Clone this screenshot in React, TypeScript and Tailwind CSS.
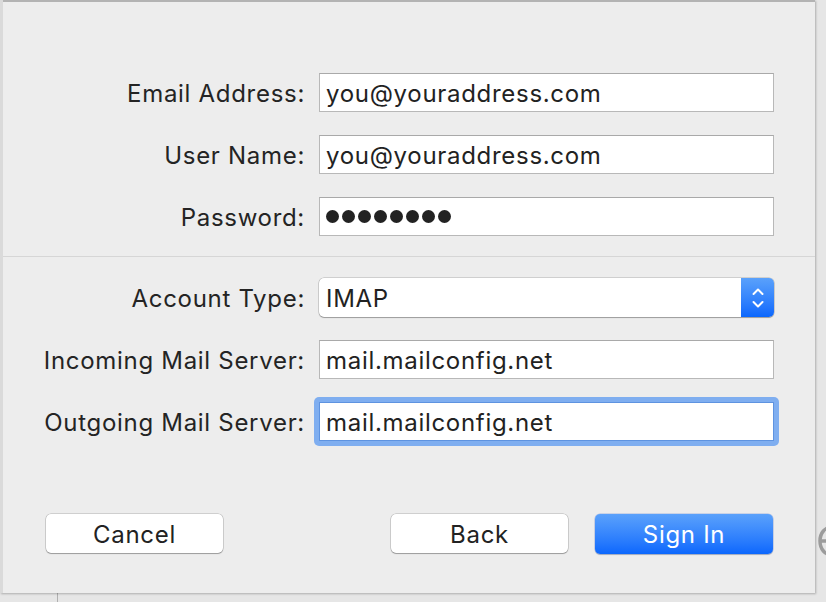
import React from "react";

const font = { fontFamily: "Inter, 'Liberation Sans', sans-serif" };

const txt = "text-[24px] tracking-[0.7px] leading-none";

function Field({ label, value, focused }: { label: string; value: React.ReactNode; focused?: boolean }) {
  return (
    <div className="flex items-center h-[39px]">
      <div className={"w-[305px] text-right text-[#242424] pr-[1px] pt-[3px] " + txt}>{label}</div>
      <div className="ml-[13px] w-[455px] h-[39px] relative">
        {focused && (
          <div className="absolute -inset-[5px] rounded-[5px] bg-[#7faef0]" />
        )}
        <div
          className={
            "relative h-full bg-white border flex items-center pl-[6px] pt-[3px] text-[#222] " + txt + " " +
            (focused ? "border-[#5e93e0]" : "border-[#b8b8b8] border-t-[#a9a9a9]")
          }
        >
          {value}
        </div>
      </div>
    </div>
  );
}

function Dots() {
  return (
    <div className="flex gap-[3px] -mt-[3px]">
      {Array.from({ length: 8 }).map((_, i) => (
        <div key={i} className="w-[13px] h-[13px] rounded-full bg-[#222]" />
      ))}
    </div>
  );
}

const whiteBtn =
  "h-[39px] rounded-[5px] bg-white shadow-[0_0_0_0.5px_rgba(0,0,0,0.25),0_1px_1px_rgba(0,0,0,0.25)] text-[#222] pt-[3px] " + txt;

export default function App() {
  return (
    <div className="w-[826px] h-[602px] bg-[#e6e6e6] relative overflow-hidden" style={font}>
      <div className="absolute left-[57px] top-[590px] w-[1px] h-[12px] bg-[#b0b0b0]" />
      <svg className="absolute left-[817px] top-[524px]" width="30" height="34" viewBox="0 0 30 34" fill="none" stroke="#9c9c9c" strokeWidth="3.5">
        <path d="M3 17 H27 C27 9 22 3 15 3 C8 3 3 9 3 17 C3 25 8 31 15 31 C20 31 24 29 26 25" />
      </svg>
      <div className="relative w-[815px] h-[593px] bg-[#ededed] border-l-[3px] border-[#dadada] shadow-[1px_1px_2px_rgba(0,0,0,0.25)] flex flex-col">
        <div className="h-[2px] bg-[#b3b3b3] w-full" />
        <div className="flex flex-col gap-[23px] mt-[71px] -ml-[2px]">
          <Field label="Email Address:" value="you@youraddress.com" />
          <Field label="User Name:" value="you@youraddress.com" />
          <Field label="Password:" value={<Dots />} />
        </div>
        <div className="mt-[20px] h-[1px] bg-[#d6d6d6]" />
        <div className="flex flex-col gap-[23px] mt-[21px] -ml-[2px]">
          <div className="flex items-center h-[39px]">
            <div className={"w-[305px] text-right text-[#242424] pr-[1px] pt-[3px] " + txt}>Account Type:</div>
            <div className="ml-[13px] w-[455px] h-[39px] flex rounded-[5px] bg-white shadow-[0_0_0_0.5px_rgba(0,0,0,0.25),0_1px_1px_rgba(0,0,0,0.25)] overflow-hidden">
              <div className={"flex-1 flex items-center pl-[7px] pt-[3px] text-[#222] " + txt}>IMAP</div>
              <div className="w-[33px] h-full bg-gradient-to-b from-[#5aa1fb] to-[#0a67fd] flex items-center justify-center">
                <svg width="14" height="26" viewBox="0 0 14 26" fill="none" stroke="white" strokeWidth="2" strokeLinecap="round" strokeLinejoin="round">
                  <path d="M2.5 9 L7 4.5 L11.5 9" />
                  <path d="M2.5 17 L7 21.5 L11.5 17" />
                </svg>
              </div>
            </div>
          </div>
          <Field label="Incoming Mail Server:" value="mail.mailconfig.net" />
          <Field label="Outgoing Mail Server:" value="mail.mailconfig.net" focused />
        </div>
        <div className="flex mt-[73px] pl-[43px] pr-[42px]">
          <button className={"w-[177px] " + whiteBtn}>Cancel</button>
          <div className="flex-1" />
          <button className={"w-[177px] " + whiteBtn}>Back</button>
          <button className={"ml-[27px] w-[178px] h-[40px] rounded-[5px] bg-gradient-to-b from-[#5aa1fb] to-[#0a67fd] shadow-[0_0_0_0.5px_rgba(0,60,200,0.3),0_1px_1px_rgba(0,0,0,0.2)] text-white pt-[1px] " + txt}>Sign In</button>
        </div>
      </div>
    </div>
  );
}
